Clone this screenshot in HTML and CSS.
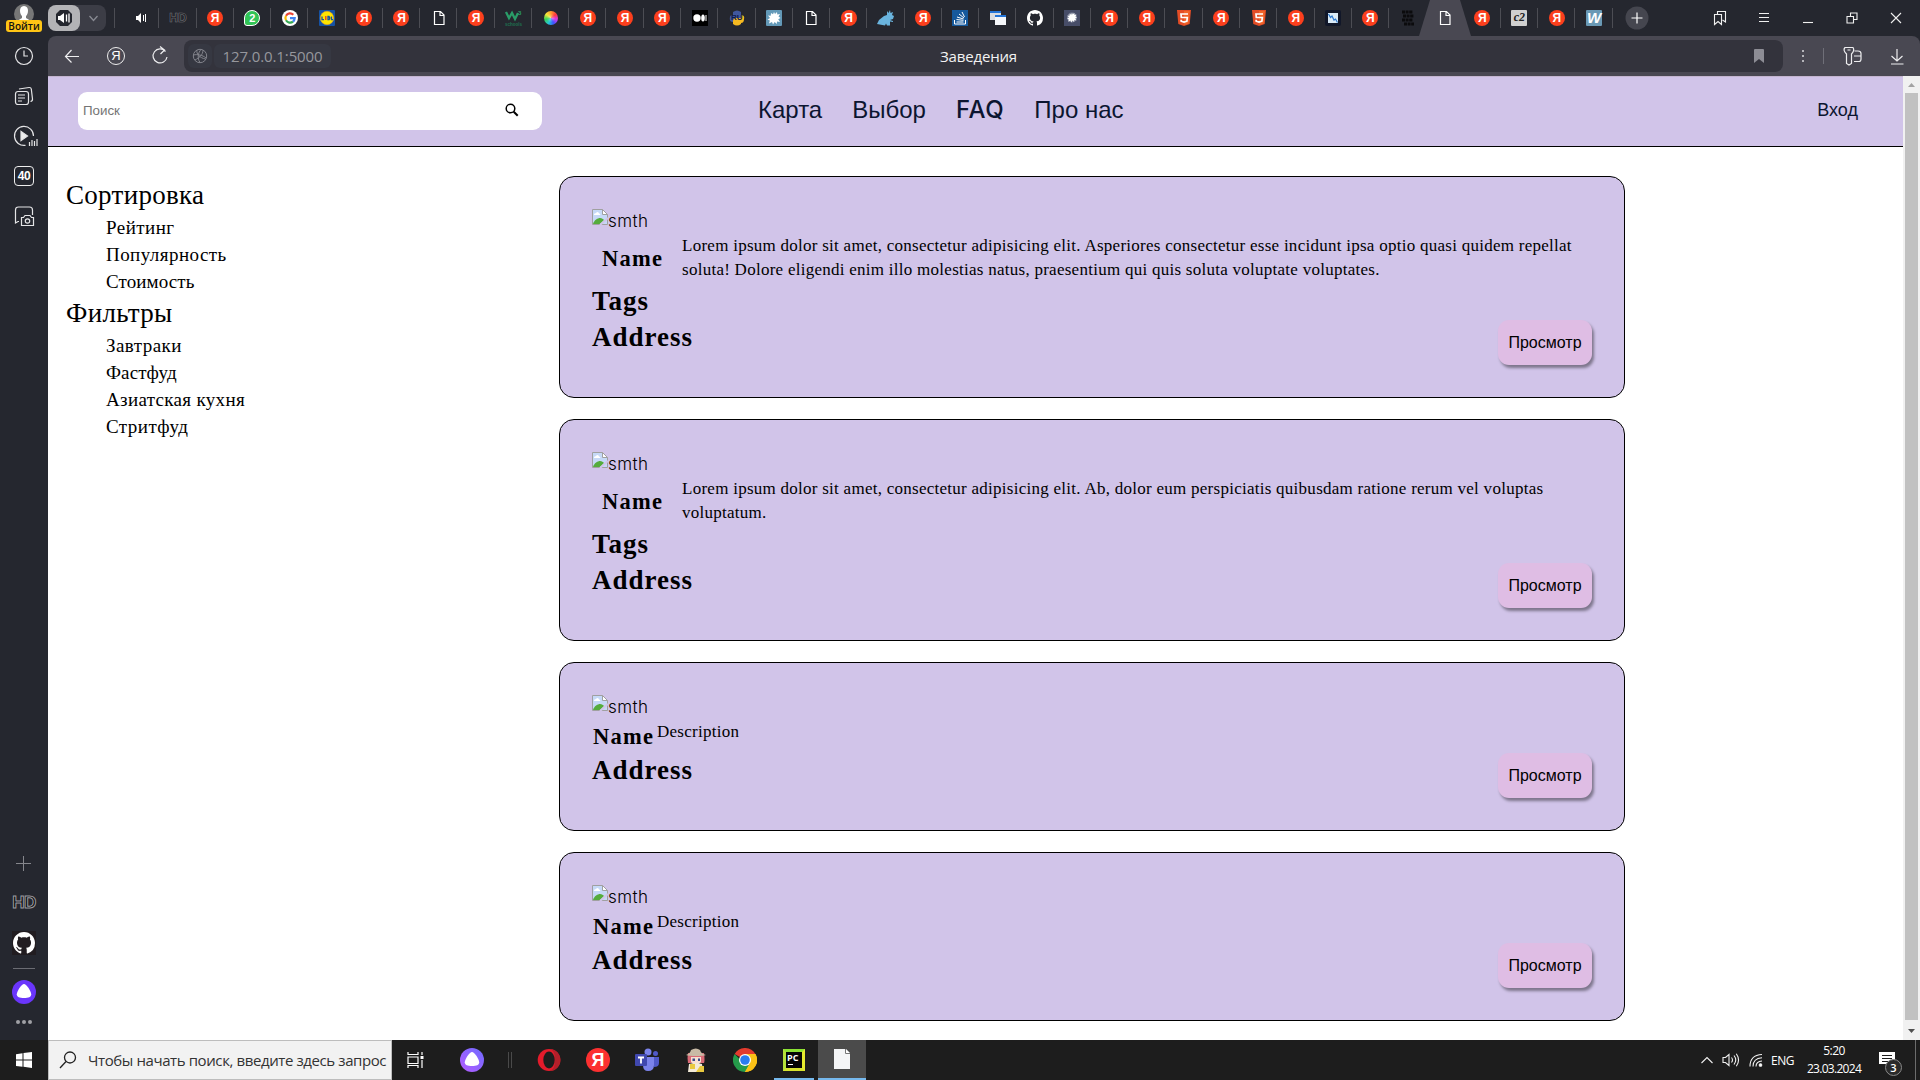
FILE: index.html
```html
<!DOCTYPE html>
<html lang="ru">
<head>
<meta charset="utf-8">
<title>Заведения</title>
<link rel="stylesheet" href="styles.css">
</head>
<body>
<svg class="defs" aria-hidden="true">
  <symbol id="doc" viewBox="0 0 16 16"><path d="M3.5 1.5h6l3.5 3.5v9.500h-9.500zM9 1.500v4h4" fill="none" stroke="#fff" stroke-width="1.200"/></symbol>
  <symbol id="github" viewBox="0 0 16 16"><path fill="#fff" d="M8 0C3.580 0 0 3.580 0 8c0 3.540 2.290 6.530 5.470 7.590.4.070.55-.17.55-.38 0-.19-.01-.82-.01-1.490-2.010.37-2.530-.49-2.690-.94-.09-.23-.48-.94-.82-1.130-.28-.15-.68-.52-.01-.53.63-.01 1.080.58 1.230.82.72 1.210 1.870.87 2.330.66.07-.52.28-.87.51-1.070-1.780-.2-3.640-.89-3.640-3.950 0-.87.31-1.590.82-2.150-.08-.2-.36-1.020.08-2.120 0 0 .67-.21 2.200.82.64-.18 1.320-.27 2-.27s1.360.09 2 .27c1.530-1.040 2.200-.82 2.200-.82.44 1.100.16 1.920.08 2.120.51.56.82 1.270.82 2.150 0 3.070-1.870 3.750-3.650 3.950.29.25.54.73.54 1.480 0 1.070-.01 1.930-.01 2.200 0 .21.15.46.55.38A8 8 0 0 0 16 8c0-4.420-3.580-8-8-8z"/></symbol>
  <symbol id="html5" viewBox="0 0 16 16"><path fill="#e44d26" d="M1 0h14l-1.300 14L8 16l-5.700-2z"/><path fill="#f16529" d="M8 1v13.800l4.600-1.300L13.800 1z"/><path d="M12 4H5l.3 3.500h6l-.4 3.700L8 12.100l-2.800-.9-.1-1.500" fill="none" stroke="#fff" stroke-width="1.700"/></symbol>
  <symbol id="burst" viewBox="0 0 16 16"><path fill="#fff" d="M8 2l1 2 2-2 .3 2.500L14 4l-1.500 2.500L14.500 8l-2.300 1.300L14 12l-3-.6-.2 2.600L8.700 12 7 14.500 6 12l-3 1.500.8-3L1.500 9.500 4 8 2 5.500l2.700.2L5 3l2 1.300z"/></symbol>
  <symbol id="alice" viewBox="0 0 24 24"><circle cx="12" cy="12" r="12"/><path fill="#fff" d="M12 4c2.500 0 7.200 7.400 7.200 10.200S16.500 18 12 18s-7.200-1-7.200-3.800S9.500 4 12 4z"/></symbol>
  <symbol id="broken" viewBox="0 0 16 16"><path fill="#c6d9f7" stroke="#a0a0a0" d="M.5.5h10l5 5v10H.5z"/><path fill="#fff" stroke="#a0a0a0" d="M10.500.5v5h5z"/><path fill="#fff" d="M2 6c0-2 2-1.500 2-2 1-2 3-1 3 .5 1.500 0 1.500 1.500 1 1.500z"/><path fill="#55ac3c" d="M1 15c1-4 5-6 7-6s3 1 4 2l-4 4z"/><path stroke="#d1c4e9" stroke-width="2" d="M8 16l8-7"/></symbol>
</svg>

<div class="browser">
  <aside class="rail">
    <div class="user"><svg width="20" height="20" viewBox="0 0 20 20"><circle cx="10" cy="10" r="10" fill="#777"/><path fill="#fff" d="M10 2c6 0 4 9 2 10v2l5 3v3H3v-3l5-3v-2C6 11 4 2 10 2z"/></svg><span class="login">Войти</span></div>
    <svg class="ri" viewBox="0 0 24 24"><circle cx="12" cy="12" r="8.500"/><path d="M12 6.500V12h4"/></svg>
    <svg class="ri" viewBox="0 0 24 24"><rect x="3.500" y="7.500" width="13" height="13" rx="2.500"/><path d="M6 11h7M6 14h7M6 17h4M7 5l10-1.500q2-.2 2.300 1.500l1.200 10q.2 2-2 2.500"/></svg>
    <svg class="ri" viewBox="0 0 24 24"><path d="M13.500 21.300A9.500 9.500 0 1 1 21.500 12"/><path d="M9 7.500v9l6.500-4.500z" fill="#eee"/><path d="M17.500 18v4M20 16v6M22.500 17v5M25 15v7"/></svg>
    <div class="forty">40</div>
    <svg class="ri" viewBox="0 0 24 24"><path d="M7 17.500H6L3.500 19V6q0-3 3-3h11q3 0 3 3v5"/><path d="M9.500 13.500h2l1.500-2h5l1.500 2h2v8h-12z"/><circle cx="15.500" cy="17" r="2.200"/></svg>
    <div class="spacer"></div>
    <svg class="plus" width="16" height="16" viewBox="0 0 16 16"><path d="M0 7.500h15M7.500 0v15"/></svg>
    <div class="hd big">HD</div>
    <div class="ghbox"><svg width="22" height="22"><use href="#github"/></svg></div>
    <div class="rule"></div>
    <svg class="al" width="24" height="24" fill="#6a35fb"><use href="#alice"/></svg>
    <div class="dots"><i></i><i></i><i></i></div>
  </aside>

  <div class="main">
    <div class="tabs">
      <div class="group"><span class="snd"><svg width="18" height="18" viewBox="0 0 18 18"><path fill="#25272f" d="M5 1h8l4 4v8l-4 4H5l-4-4V5z"/><path fill="#fff" d="M3 7h2l4-3v10l-4-3H3z"/><path stroke="#fff" stroke-width="1.300" fill="none" d="M11.500 5.500v7M14 4.500v9"/></svg></span><svg width="26" height="26" viewBox="0 0 26 26"><path d="M9.500 11l4 4.500 4-4.500" fill="none" stroke="#888a92" stroke-width="1.300"/></svg></div>
      <div class="strip">
        <div class="tab"><svg width="12" height="12" viewBox="0 0 12 12"><path fill="#fff" d="M1 4h2l3-3v10L3 8H1z"/><path stroke="#fff" d="M8.500 3v6M10.500 2v8"/></svg></div>
        <div class="tab"><span class="hd">HD</span></div>
        <div class="tab"><b class="ya">Я</b></div>
        <div class="tab"><b class="wa">2</b></div>
        <div class="tab"><svg width="16" height="16" viewBox="0 0 16 16"><circle cx="8" cy="8" r="8" fill="#fff"/><g fill="none" stroke-width="2.200"><path stroke="#ea4335" d="M4 5.700a4.700 4.700 0 0 1 7.300-1"/><path stroke="#fbbc05" d="M4 5.700a5 5 0 0 0 0 4.600"/><path stroke="#34a853" d="M4 10.300a4.700 4.700 0 0 0 7 1.300"/><path stroke="#4285f4" d="M11 11.600a5 5 0 0 0 1.700-3.400H8"/></g></svg></div>
        <div class="tab"><svg width="16" height="16" viewBox="0 0 16 16"><rect width="16" height="16" rx="1" fill="#1552a5"/><circle cx="8" cy="8" r="6.700" fill="#ffe500" stroke="#e8a02a" stroke-width=".6"/><path stroke="#1552a5" stroke-width="1.300" fill="none" d="M3 6.500v3.200h2M9 6.500v3.200h1q1.500-1.600 0-3.200zM12.500 6.500v3.200H14"/><path stroke="#e3342a" stroke-width="1.300" d="M6.800 6v4"/></svg></div>
        <div class="tab"><b class="ya">Я</b></div>
        <div class="tab"><b class="ya">Я</b></div>
        <div class="tab"><svg width="16" height="16"><use href="#doc"/></svg></div>
        <div class="tab"><b class="ya">Я</b></div>
        <div class="tab"><svg width="18" height="18" viewBox="0 0 18 18"><path d="M2 3l3 6 3-5 3 6 3-6" fill="none" stroke="#2a9c68" stroke-width="2.300"/><text x="14" y="6" class="w3n">3</text><text x="1" y="16.500" class="w3s">schools</text></svg></div>
        <div class="tab"><span class="wheel"></span></div>
        <div class="tab"><b class="ya">Я</b></div>
        <div class="tab"><b class="ya">Я</b></div>
        <div class="tab"><b class="ya">Я</b></div>
        <div class="tab"><svg width="16" height="16" viewBox="0 0 16 16"><path d="M0 0h16v16H0z"/><g fill="#fff"><circle cx="5" cy="8" r="3.700"/><ellipse cx="11" cy="8" rx="1.800" ry="3.500"/><path d="M13.500 5h1v6h-1z"/></g></svg></div>
        <div class="tab"><svg width="16" height="16" viewBox="0 0 16 16"><path fill="#40579e" d="M4 2q4-3 8 0v6H7q-3 0-3 4Q0 12 1 7q0-2 3-2z"/><path fill="#f5b921" d="M12 14q-4 3-8 0v-3q0-3 3-3h5V5q4 0 3 4 0 4-3 4z"/><text x="2" y="10" class="ru">RU</text></svg></div>
        <div class="tab"><svg width="16" height="16"><rect width="16" height="16" rx="1" fill="#6399b8"/><use href="#burst"/></svg></div>
        <div class="tab"><svg width="16" height="16"><use href="#doc"/></svg></div>
        <div class="tab"><b class="ya">Я</b></div>
        <div class="tab"><svg width="17" height="16" viewBox="0 0 17 16"><path fill="#6ab4de" d="M0 14l2-4 5-4 3-1V1l1.500 2L13 0l.5 3L16 2l-1 3 2 1-1 3-3 1 3 1v1l-3-.5v4h-3l-1-2-1 2z"/></svg></div>
        <div class="tab"><b class="ya">Я</b></div>
        <div class="tab"><svg width="16" height="16" viewBox="0 0 16 16"><path fill="#16599c" d="M0 0h16v16H0z"/><path stroke="#fff" fill="none" d="M2.500 10v4h11v-4M4.500 12h7M4.500 9.500l7 .8M5 7l6.500 2M7 4l5 4M10 2l2.500 5"/></svg></div>
        <div class="tab"><svg width="16" height="16" viewBox="0 0 16 16"><path fill="#d7dce2" d="M0 1h11v9H0z"/><path fill="#2274d8" d="M0 1h11v2H0z"/><path fill="#f5f7fa" d="M5 6h11v9H5z"/><path fill="#2274d8" d="M5 5h11v2H5z"/></svg></div>
        <div class="tab"><svg width="16" height="16"><use href="#github"/></svg></div>
        <div class="tab"><svg width="16" height="16" viewBox="0 0 16 16"><path fill="#474d68" d="M0 0h16v16H0z"/><circle cx="8" cy="7.500" r="5" fill="#7d8399"/><use href="#burst" x="2" y="1.500" width="12" height="12"/></svg></div>
        <div class="tab"><b class="ya">Я</b></div>
        <div class="tab"><b class="ya">Я</b></div>
        <div class="tab"><svg width="16" height="16"><use href="#html5"/></svg></div>
        <div class="tab"><b class="ya">Я</b></div>
        <div class="tab"><svg width="16" height="16"><use href="#html5"/></svg></div>
        <div class="tab"><b class="ya">Я</b></div>
        <div class="tab"><svg width="16" height="16" viewBox="0 0 16 16"><rect width="16" height="16" rx="2" fill="#111729"/><path fill="#d9eaf7" d="M3 3h10v10H3z"/><path d="M3.500 4l2 3.500L7 6l2 4 1.500-1 2 3.500" fill="none" stroke="#2a78d0" stroke-width="1.200"/></svg></div>
        <div class="tab"><b class="ya">Я</b></div>
        <div class="tab noline"><svg width="14" height="16" viewBox="0 0 14 16"><path stroke="#0b0b0d" stroke-width="3.200" stroke-dasharray="3 .6" d="M1 2h11M2 6h11M1 10h11M3 14h10"/></svg></div>
        <div class="tab active"><svg class="shape" width="52" height="36" viewBox="0 0 52 36"><path fill="#494852" d="M0 36L11 0h30l11 36z"/></svg><svg class="over" width="16" height="16"><use href="#doc"/></svg></div>
        <div class="tab"><b class="ya">Я</b></div>
        <div class="tab"><i class="c2">c2</i></div>
        <div class="tab"><b class="ya">Я</b></div>
        <div class="tab"><i class="ww">W</i></div>
      </div>
      <svg class="newtab" width="24" height="24" viewBox="0 0 24 24"><circle cx="12" cy="12" r="11.500" fill="#45464f"/><path stroke="#fff" stroke-width="1.200" d="M6.500 12h11M12 6.500v11"/></svg>
      <div class="win">
        <svg viewBox="0 0 16 16"><path d="M2.500 4.500h7v10L6 11.500l-3.500 3zM5.500 4V1.500h8v10.500l-3-2"/></svg>
        <svg viewBox="0 0 16 16"><path d="M3 3.500h10M3 7.500h10M3 11.500h10"/></svg>
        <svg viewBox="0 0 16 16"><path d="M3 12.500h10"/></svg>
        <svg viewBox="0 0 16 16"><path d="M3 6.500h6.500v6.500H3zM6.500 6V3H13v6.500H10"/></svg>
        <svg viewBox="0 0 16 16"><path d="M3 3l10 10M13 3L3 13"/></svg>
      </div>
    </div>

    <div class="toolbar">
      <svg class="ti" viewBox="0 0 24 24"><path d="M19 12.500H6M11.500 6L5.500 12.500l6 6"/></svg>
      <span class="yabtn">Я</span>
      <svg class="ti" viewBox="0 0 24 24"><path d="M17.500 7.500A7 7 0 1 0 19 13M12 2.500l4.500 3.500-4 4"/></svg>
      <div class="address">
        <span class="chip globe"><svg width="16" height="16" viewBox="0 0 16 16"><g fill="none" stroke="#83848c" stroke-width="1"><circle cx="8" cy="8" r="6.700"/><path d="M3 12C7 10 11 7 11 2M5 2c-1 4 3 8 8.500 9M1.500 7c4-1 9 0 12.500 3M8 14.500C5 10 6 5 9 1.500"/></g></svg></span>
        <span class="chip url">127.0.0.1:5000</span>
        <span class="title">Заведения</span>
        <svg class="mark" width="12" height="14" viewBox="0 0 12 14"><path fill="#8d8d95" d="M2 0h8q1 0 1 1v13l-5-4-5 4V1q0-1 1-1z"/></svg>
      </div>
      <svg class="more" width="4" height="14" viewBox="0 0 4 14"><path fill="#b5b5ba" d="M1 1h2v2H1zM1 6h2v2H1zM1 11h2v2H1z"/></svg>
      <span class="vline"></span>
      <svg class="ti key" viewBox="0 0 24 24"><path d="M4 3.500h8q2 3-1.500 6.500v9.500L8 21l-2.500-1.500V10Q1.500 6 4 3.500zM6.500 6h3M13.500 7H17q3 0 3 2.500V15q0 2.500-2 2.500h-5M13 12h7"/></svg>
      <svg class="ti dl" viewBox="0 0 24 24"><path d="M12 5v12M6.500 12l5.500 5 5.500-5M6 20h12.500"/></svg>
    </div>

    <div class="viewport">
      <div class="page">
        <header class="head">
          <div class="search"><span>Поиск</span><svg width="14" height="14" viewBox="0 0 14 14"><circle cx="5.500" cy="5.500" r="4.300" fill="none" stroke="#000" stroke-width="1.500"/><path d="M8.700 8.700l4 4" stroke="#000" stroke-width="2"/></svg></div>
          <nav class="nav"><a>Карта</a><a>Выбор</a><a class="faq">FAQ</a><a>Про нас</a></nav>
          <a class="signin">Вход</a>
        </header>
        <div class="content">
          <div class="filters">
            <h2>Сортировка</h2>
            <ul><li>Рейтинг</li><li>Популярность</li><li class="st">Стоимость</li></ul>
            <h2>Фильтры</h2>
            <ul><li>Завтраки</li><li class="st">Фастфуд</li><li class="kit">Азиатская кухня</li><li>Стритфуд</li></ul>
          </div>
          <div class="cards">
            <article class="card">
              <div class="pic"><svg width="16" height="16"><use href="#broken"/></svg><span>smth</span></div>
              <div class="info"><h4>Name</h4><p>Lorem ipsum dolor sit amet, consectetur adipisicing elit. Asperiores consectetur esse incidunt ipsa optio quasi quidem repellat<br>soluta! Dolore eligendi enim illo molestias natus, praesentium qui quis soluta voluptate voluptates.</p></div>
              <h3>Tags</h3>
              <div class="foot"><h3>Address</h3><span class="btn">Просмотр</span></div>
            </article>
            <article class="card">
              <div class="pic"><svg width="16" height="16"><use href="#broken"/></svg><span>smth</span></div>
              <div class="info"><h4>Name</h4><p>Lorem ipsum dolor sit amet, consectetur adipisicing elit. Ab, dolor eum perspiciatis quibusdam ratione rerum vel voluptas<br>voluptatum.</p></div>
              <h3>Tags</h3>
              <div class="foot"><h3>Address</h3><span class="btn">Просмотр</span></div>
            </article>
            <article class="card short">
              <div class="pic"><svg width="16" height="16"><use href="#broken"/></svg><span>smth</span></div>
              <div class="info"><h4>Name</h4><p>Description</p></div>
              <div class="foot"><h3>Address</h3><span class="btn">Просмотр</span></div>
            </article>
            <article class="card short">
              <div class="pic"><svg width="16" height="16"><use href="#broken"/></svg><span>smth</span></div>
              <div class="info"><h4>Name</h4><p>Description</p></div>
              <div class="foot"><h3>Address</h3><span class="btn">Просмотр</span></div>
            </article>
          </div>
        </div>
      </div>
      <div class="scroll"><svg width="17" height="17" viewBox="0 0 17 17"><path fill="#a3a3a3" d="M5 11h7L8.500 7z"/></svg><div class="thumb"></div><svg width="17" height="20" viewBox="0 0 17 20"><path fill="#505050" d="M5 9h7l-3.500 4z"/></svg></div>
    </div>
  </div>
</div>

<footer class="taskbar">
  <div class="start"><svg width="16" height="16" viewBox="0 0 16 16"><path fill="#fff" d="M0 2.200L6.500 1.300v6.200H0zM7.500 1.100L16 0v7.500H7.500zM0 8.500h6.500v6.300L0 13.900zM7.500 8.500H16V16l-8.500-1.200z"/></svg></div>
  <div class="wsearch"><svg width="18" height="18" viewBox="0 0 18 18"><circle cx="11" cy="6.500" r="5.500"/><path d="M7 10.500L1 17"/></svg><span>Чтобы начать поиск, введите здесь запрос</span></div>
  <div class="slot tv"><svg width="18" height="16" viewBox="0 0 18 16"><path fill="none" stroke="#fff" stroke-width="1.200" d="M1 0v2.500h10V0M1 5h10v6.500H1zM1 16v-2.500h10V16M15 0v3M15 8v8"/><path fill="#fff" d="M13.500 4h3v3h-3z"/></svg></div>
  <div class="slot al2"><svg width="24" height="24" viewBox="0 0 24 24"><defs><linearGradient id="ag" x1="1" y1="0" x2="0" y2="1"><stop offset="0" stop-color="#6f6bff"/><stop offset="1" stop-color="#b45cff"/></linearGradient></defs><use href="#alice" fill="url(#ag)"/></svg></div>
  <div class="sep"></div>
  <div class="slot op"><svg width="24" height="24" viewBox="0 0 24 24"><ellipse cx="12" cy="12" rx="11.300" ry="11" fill="#e31b2b"/><path fill="#b3202a" d="M13 1c6 0 10.500 5 10.500 11S19 23 13 23c4-2 5-5 5-11S17 3 13 1z"/><ellipse cx="12" cy="12" rx="5.700" ry="8.500" fill="#1d1d1d"/></svg></div>
  <div class="slot"><b class="ya24">Я</b></div>
  <div class="slot"><svg width="24" height="24" viewBox="0 0 24 24"><circle cx="13" cy="4" r="3.500" fill="#7b83eb"/><circle cx="20.500" cy="5.500" r="2.500" fill="#5059c9"/><path fill="#5059c9" d="M16 9h8v6q0 4-5 4z"/><path fill="#7b83eb" d="M8 9h11v8q0 6-6 6-5 0-5-6z"/><rect y="6" width="12" height="12" rx="1" fill="#4048ae"/><path stroke="#fff" stroke-width="1.800" d="M3 9.500h6M6 9.500v6"/></svg></div>
  <div class="slot"><svg width="24" height="24" viewBox="0 0 24 24"><path fill="#d96a76" d="M4 5h16q1 8 0 10H4q-1-5 0-10z"/><path fill="#f7dfd2" d="M7 9h10v5q-5 5-10 0z"/><path fill="#c9bba6" d="M2 7q4-1 5-5 5-3 9 0 1 4 6 5-3 1-10 1-7 0-10-1z"/><path fill="#f3ead8" d="M5 16q7-2 13 0l1 8H4z"/><path fill="#e9c93f" d="M6 16h5v5H6zM16 18h4v6h-8z"/><path fill="#394a88" d="M8.500 10.500H11V13H8.500zM14 10.500h2V13h-2z"/></svg></div>
  <div class="slot"><svg width="24" height="24" viewBox="0 0 24 24"><path fill="#e33b2e" d="M12 12L1.600 6A12 12 0 0 1 22.400 6z"/><path fill="#fbc116" d="M12 12L22.400 6A12 12 0 0 1 12 24z"/><path fill="#259b4a" d="M1.600 6A12 12 0 0 0 12 24l5-9-5 1.500z"/><path fill="#fbc116" d="M17.200 15L12 24A12 12 0 0 0 22.400 6H12z"/><circle cx="12" cy="12" r="6" fill="#fff"/><circle cx="12" cy="12" r="4.800" fill="#2a7cf0"/></svg></div>
  <div class="slot run"><span class="pc">PC</span></div>
  <div class="slot on"><svg width="18" height="22" viewBox="0 0 18 22"><path fill="#f4f5f6" d="M1 1h12l4 4v16H1z"/><path fill="#fff" stroke="#777" d="M12.500 1v4.500H17"/></svg></div>
  <div class="tray">
    <svg width="14" height="10" viewBox="0 0 14 10"><path d="M1.500 8L7 2.500 12.500 8"/></svg>
    <svg class="vol" width="18" height="16" viewBox="0 0 18 16"><path d="M1 5.500h2.500L7 2.500v11l-3.500-3H1zM9.500 5.500q2 2.500 0 5M12 3.500q3.500 4.500 0 9M14.300 1.700q4.500 6.300 0 12.600"/></svg>
    <svg class="wifi" width="14" height="14" viewBox="0 0 14 14"><path d="M1 13.500Q1 2 13 1.500M4 13.500Q4 5.500 13 4.800M7 13.500Q7 8.500 13 8"/><circle cx="11.500" cy="12" r="1.300" fill="#fff"/></svg>
    <span class="lang">ENG</span>
    <span class="clock"><span>5:20</span><span class="date">23.03.2024</span></span>
    <span class="notif"><svg width="18" height="18" viewBox="0 0 18 18"><path class="sheet" d="M1 1h16v12h-6l-3 4v-4H1z"/><path class="lines" d="M4 4.500h10M4 7.500h10M4 10.500h6"/></svg><i>3</i></span>
    <span class="peek"></span>
  </div>
</footer>
</body>
</html>
```

FILE: styles.css
```css
* { box-sizing: border-box; }
body { margin: 0; width: 1920px; height: 1080px; overflow: hidden; display: flex; flex-direction: column; background: #fff; font-family: "Open Sans", sans-serif; }
svg { display: block; flex: none; }
h2, h3, h4, p, ul { margin: 0; padding: 0; }
.defs { position: absolute; width: 0; height: 0; }

.browser { display: flex; height: 1040px; }
.main { flex: 1; display: flex; flex-direction: column; background: #25272f; min-width: 0; }

/* left rail */
.rail { width: 48px; background: #25272f; display: flex; flex-direction: column; align-items: center; height: 1040px; }
.user { height: 44px; padding-top: 4px; display: flex; flex-direction: column; align-items: center; }
.login { width: 36px; height: 12px; margin-top: -4px; border-radius: 3px; background: #ffc515; color: #111; font: 600 10px/12px "Open Sans", sans-serif; text-align: center; z-index: 1; }
.ri { width: 24px; height: 24px; margin-bottom: 16px; overflow: visible; fill: none; stroke: #e4e4e6; stroke-width: 1.2; }
.forty { width: 20px; height: 20px; margin: 2px 0 18px; border: 1px solid #eee; border-radius: 4px; color: #fff; font: bold 12px/18px "Liberation Sans", sans-serif; text-align: center; letter-spacing: -.3px; }
.spacer { flex: 1; }
.plus { stroke: #85868c; margin-bottom: 22px; }
.hd { font: bold 12px/16px "Liberation Sans", sans-serif; color: #17181c; -webkit-text-stroke: .6px #75767c; }
.hd.big { font-size: 17px; line-height: 18px; height: 18px; letter-spacing: -.5px; color: #0c0c0e; -webkit-text-stroke: 1px #9c9ca0; margin-bottom: 19px; }
.ghbox { width: 24px; height: 24px; padding: 1px; background: #211c20; margin-bottom: 13px; }
.rule { width: 22px; height: 1px; background: #6b6c73; margin-bottom: 11px; }
.dots { display: flex; gap: 2px; margin: 16px 0; }
.dots i { width: 4px; height: 4px; border-radius: 50%; background: #a0a0a5; }

/* tab strip */
.tabs { height: 36px; display: flex; align-items: flex-start; }
.group { display: flex; width: 58px; height: 26px; margin-top: 5px; border-radius: 8px; background: #3c3d46; }
.snd { width: 32px; height: 26px; border-radius: 8px; background: #b3b3b6; display: flex; align-items: center; justify-content: center; }
.strip { display: flex; margin-left: 8px; padding-left: 8px; background: linear-gradient(#4c4d54, #4c4d54) 0 8px / 1px 20px no-repeat; }
.tab { position: relative; width: 37.28px; height: 36px; display: flex; align-items: center; justify-content: center; background: linear-gradient(#4c4d54, #4c4d54) right 8px / 1px 20px no-repeat; }
.noline, .active { background: none; }
.shape { position: absolute; left: -7px; top: 0; }
.over { position: relative; }
.ya { width: 16px; height: 16px; border-radius: 50%; background: #fc3f1d; color: #fff; font: bold 12px/16px "Liberation Sans", sans-serif; text-align: center; }
.wa { width: 16px; height: 16px; border-radius: 50% 50% 50% 3px; background: #31c456; border: 1px solid #fff; color: #fff; font: bold 11px/14px "Liberation Sans", sans-serif; text-align: center; }
.w3n { font: bold 6px "Liberation Sans", sans-serif; fill: #2a9c68; }
.w3s { font: bold 4.500px "Liberation Sans", sans-serif; fill: #1e7350; }
.ru { font: bold 8px "Liberation Sans", sans-serif; fill: #101c4a; }
.wheel { width: 14px; height: 14px; border-radius: 50%; background: radial-gradient(#fff6, transparent 45%), conic-gradient(#ff9d2e, #ff3b3b, #d838e8, #3b55ff, #25c7d8, #39d353, #f5e63a, #ff9d2e); }
.c2, .ww { width: 16px; height: 16px; border-radius: 1px; background: #d0d0d0; color: #222; font: italic bold 12px/15px "Liberation Serif", serif; text-align: center; }
.ww { background: #6a99b5; color: #fff; font: italic bold 15px/16px "Liberation Sans", sans-serif; }
.newtab { margin: 6px 0 0 12px; }
.win { margin: 10px 16px 0 auto; display: flex; gap: 28px; }
.win svg { width: 16px; height: 16px; fill: none; stroke: #f0f0f0; stroke-width: 1.1; }

/* toolbar */
.toolbar { height: 40px; background: #494852; border-radius: 8px 8px 0 0; display: flex; align-items: center; padding-left: 12px; }
.ti { width: 24px; height: 24px; fill: none; stroke: #eeeef0; stroke-width: 1.2; }
.yabtn { width: 18px; height: 18px; margin: 0 23px; border: 1.200px solid #eee; border-radius: 50%; color: #fff; font: 13px/16px "Liberation Sans", sans-serif; text-align: center; }
.address { margin-left: 12px; width: 1599px; height: 32px; border-radius: 8px; background: #33333c; display: flex; align-items: center; padding: 0 18px 0 4px; }
.chip { height: 24px; border-radius: 6px; background: #363842; display: flex; align-items: center; justify-content: center; }
.globe { width: 24px; margin-right: 2px; }
.url { width: 117px; color: #96979d; font-size: 15px; letter-spacing: -.1px; }
.title { margin-left: 609px; color: #f2f2f2; font-size: 15px; letter-spacing: -.17px; }
.mark { margin-left: auto; }
.more { margin-left: 18px; }
.vline { width: 1px; height: 16px; background: #6f6f78; margin: 0 17px 0 18px; }
.dl { margin-left: 20px; }

/* web page */
.viewport { flex: 1; display: flex; background: #fff; }
.page { width: 1855px; }
.head { height: 71px; background: #d1c4e9; border-top: 1px solid #c4b5cf; border-bottom: 1px solid #000; display: flex; align-items: center; padding: 0 45px 2px 30px; color: #0c1530; font-family: "Liberation Sans", sans-serif; }
.search { width: 464px; height: 38px; border-radius: 9px; background: #fff; display: flex; align-items: center; justify-content: space-between; padding: 0 23px 0 5px; color: #757575; font-size: 13.33px; }
.search svg { margin-bottom: 2px; }
.nav { display: flex; gap: 30px; margin: 0 0 2px 216px; font-size: 24px; line-height: 28px; }
.faq { font-family: Inter, sans-serif; font-weight: 450; letter-spacing: .6px; }
.signin { margin-left: auto; font-size: 18px; }
.content { display: flex; padding-top: 29px; font-family: "Liberation Serif", serif; color: #000; }
.filters { width: 511px; padding: 1px 0 0 18px; }
.filters h2 { font-weight: 400; font-size: 27px; line-height: 37px; letter-spacing: .3px; }
.filters ul { list-style: none; padding-left: 40px; font-size: 19px; line-height: 27px; letter-spacing: .45px; }
.filters .st { letter-spacing: .1px; }
.filters .kit { letter-spacing: .33px; }
.cards { width: 1066px; display: flex; flex-direction: column; gap: 21px; }
.card { height: 222px; padding: 32px; border: 1px solid #000; border-radius: 15px; background: #d1c4e9; }
.card.short { height: 169px; }
.pic { height: 24px; display: flex; }
.pic span { font: 300 17px/24px Inter, sans-serif; letter-spacing: .4px; }
.info { display: flex; height: 51px; }
.info h4 { width: 90px; padding: 14px 0 0 10px; font-size: 22.5px; line-height: 24px; letter-spacing: 1.25px; }
.info p { padding-top: 1px; font-size: 17px; line-height: 24px; letter-spacing: .263px; white-space: nowrap; }
.short .info { height: 34px; }
.short .info h4 { width: 65px; padding: 6px 0 0 1px; }
.card h3 { font-size: 27px; line-height: 35px; height: 36px; letter-spacing: 1px; }
.foot { display: flex; justify-content: space-between; height: 45px; }
.btn { width: 94px; height: 45px; border-radius: 11px; background: #dfbde4; box-shadow: 2px 3px 3px #0006; font: 16px/45px "Liberation Sans", sans-serif; text-align: center; }
.scroll { width: 17px; background: #f1f1f1; display: flex; flex-direction: column; }
.thumb { flex: 1; margin: 0 2px; background: #c1c1c1; }

/* taskbar */
.taskbar { height: 40px; background: #1d1d1d; display: flex; }
.start { width: 48px; display: flex; align-items: center; justify-content: center; }
.wsearch { width: 344px; border: 1px solid #bdbdbd; background: #f2f2f2; display: flex; align-items: center; padding-left: 10px; color: #333; font-size: 15px; letter-spacing: -.4px; white-space: nowrap; }
.wsearch svg { fill: none; stroke: #222; stroke-width: 1.3; margin-right: 11px; }
.slot { width: 48px; margin-right: 1px; display: flex; align-items: center; justify-content: center; }
.tv { margin-right: 8px; }
.sep { width: 4px; height: 16px; margin: 12px 13px 0 11px; border: 1px solid #4a4a4a; border-width: 0 1px; }
.ya24 { width: 24px; height: 24px; border-radius: 50%; background: #fc3030; color: #fff; font: bold 18px/24px "Liberation Sans", sans-serif; text-align: center; }
.pc { width: 22px; height: 22px; border: 3px solid; border-color: #8be234 #e5ea2e #d8e32f #b5e23a; background: linear-gradient(#fff, #fff) 2px 12px / 5px 1px no-repeat #050505; color: #fff; font: bold 9px/11px "Open Sans", sans-serif; padding-left: 1px; }
.run { background: linear-gradient(#76b9ed, #76b9ed) center bottom / 40px 2px no-repeat; }
.on { background: #4b4b4b; border-bottom: 2px solid #76b9ed; margin-left: -1px; }
.tray { margin-left: auto; display: flex; align-items: center; color: #fff; font-size: 12px; }
.tray svg { fill: none; stroke: #f0f0f0; stroke-width: 1.1; }
.vol { margin-left: 8px; }
.wifi { margin-left: 9px; }
.lang { margin-left: 8px; width: 24px; letter-spacing: -.5px; }
.clock { margin-left: 11px; width: 56px; display: flex; flex-direction: column; align-items: center; line-height: 18px; letter-spacing: -.5px; }
.date { letter-spacing: -.7px; }
.notif { position: relative; margin-left: 16px; }
.tray .sheet { fill: #fff; stroke: none; }
.tray .lines { stroke: #1d1d1d; }
.notif i { position: absolute; left: 7px; top: 8px; width: 17px; height: 17px; border-radius: 50%; border: 1px solid #8a8a8a; background: #2a2a2a; font: 600 11px/15px "Open Sans", sans-serif; text-align: center; }
.peek { width: 1px; height: 40px; background: #6c6c6c; margin: 0 4px 0 19px; }
```
